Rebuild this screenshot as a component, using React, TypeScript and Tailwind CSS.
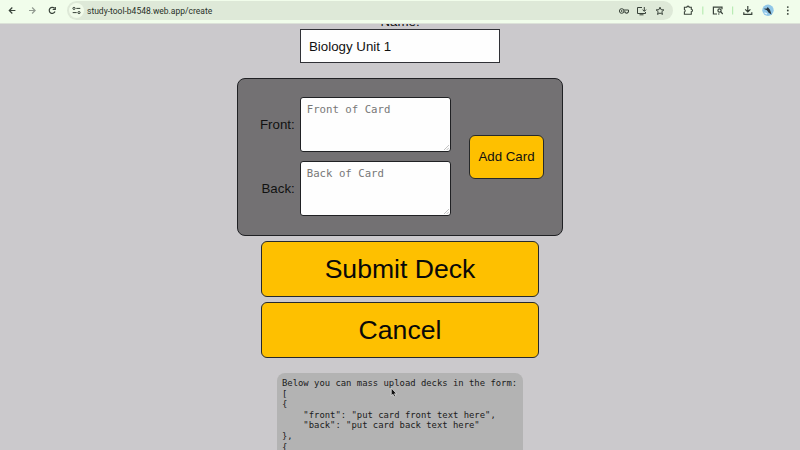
import React from 'react';

const line = { fill: 'none', stroke: '#39433a', strokeWidth: 1.2 } as const;

function Toolbar() {
  return (
    <header className="relative z-10 flex h-6 shrink-0 border-b border-[#dce2d8] bg-[#f1fdeb]">
      <svg className="h-[21px] w-[67px] shrink-0" viewBox="0 0 67 21" {...line}>
        <path d="M15.4 10.5H9.5M12.3 7.5l-3 3 3 3" />
        <path d="M29 10.5h5.9M32.1 7.5l3 3-3 3" stroke="#929b91" />
        <path d="M54.5 8.4a3 3 0 1 0 .5 3.2M55.3 6.9v2.6h-2.6" />
      </svg>
      <div className="mt-[1px] flex h-[19px] w-[606px] items-center rounded-full bg-[#dee9d8]">
        <div className="ml-[2px] flex h-[15px] w-[15px] items-center justify-center rounded-full bg-[#f1fbea]">
          <svg width="9" height="9" viewBox="0 0 9 9" fill="none" stroke="#39433a" strokeWidth="1">
            <circle cx="2" cy="2.4" r="1.1" />
            <path d="M4.3 2.4h4M.7 6.6h4" />
            <circle cx="7" cy="6.6" r="1.1" />
          </svg>
        </div>
        <span className="ml-[3px] w-[126px] whitespace-nowrap font-['Roboto',sans-serif] text-[8.5px] leading-3 text-[#293129]">study-tool-b4548.web.app/create</span>
        <svg className="ml-auto mr-[8px]" width="48" height="12" viewBox="0 0 48 12" {...line} strokeWidth="1">
          <circle cx="4.7" cy="6" r="2.3" />
          <circle cx="4.7" cy="6" r=".5" />
          <path d="M6.8 5h4.7v2.3h-1v.9H8.7V7H6.8" />
          <path d="M25 2.5h-4.5v6h8V7M22.5 9.8h4M27.3 2v4M25.5 4.6l1.8 1.8 1.8-1.8" />
          <path d="m43 2.2 1.1 2.5 2.8.2-2.1 1.8.7 2.7L43 8l-2.5 1.4.7-2.7-2.1-1.8 2.8-.2z" />
        </svg>
      </div>
      <svg className="h-[21px] w-[127px] shrink-0" viewBox="673 0 127 21" {...line}>
        <path d="M684.4 7.3h2.4a1.2 1.2 0 0 1 2.4 0h2.1v2a1.2 1.2 0 0 1 0 2.4v2.5h-6.9v-2.3a1.3 1.3 0 0 0 0-2.4z" strokeWidth="1.1" />
        <path d="M702.8 6.5v8M732.6 6.5v8" stroke="#b9ecb4" />
        <path d="M717 14h-3.6V7.2h8.6v2" />
        <circle cx="719.5" cy="10.5" r="1.6" />
        <path d="m720.7 11.7 2 2.3M718 14h1.5" />
        <path d="M747.8 6v5.8M745.2 9.4l2.6 2.6 2.6-2.6M743.8 12.2v2.2h8v-2.2" />
        <circle cx="768" cy="10.3" r="5.7" fill="#91c7e8" stroke="none" />
        <path d="m763.5 8.8 3.4-.3.8-1.5 2.3 2.8 1.5 4.8-2.8-1.9-1.8-2.4z" fill="#26333b" stroke="none" />
        <path d="m764.5 12.8 2.5 1.2" stroke="#e9f6ff" />
        <g fill="#39433a" stroke="none">
          <circle cx="787.8" cy="7.1" r=".9" />
          <circle cx="787.8" cy="10.5" r=".9" />
          <circle cx="787.8" cy="13.9" r=".9" />
        </g>
      </svg>
    </header>
  );
}

function CardField({ label, hint }: { label: string; hint: string }) {
  return (
    <div className="flex items-center justify-end gap-[5px]">
      <label className="pt-[1px] text-[13.3px] leading-4">{label}</label>
      <div className="relative">
        <textarea
          placeholder={hint}
          className="block h-[55px] w-[151px] resize-none rounded-[3px] border border-[#202124] bg-[#fefefe] px-[6px] py-[5px] font-['DejaVu_Sans_Mono',monospace] text-[10.7px] leading-[14px] placeholder:text-[#777777] placeholder:opacity-100"
        />
        <svg className="absolute bottom-[2px] right-[2px]" width="5" height="5" viewBox="0 0 5 5" stroke="#999999" strokeWidth=".6">
          <path d="M0 5 5 0M2.7 5 5 2.7" />
        </svg>
      </div>
    </div>
  );
}

function DeckButton({ children }: { children: React.ReactNode }) {
  return (
    <button className="h-14 w-[278px] rounded-[6px] border border-[#26292b] bg-[#fec000] text-[26.6px] leading-8 text-[#090909]">
      {children}
    </button>
  );
}

const sample = `Below you can mass upload decks in the form:
[
{
    "front": "put card front text here",
    "back": "put card back text here"
},
{`;

export default function App() {
  return (
    <div className="relative flex h-[450px] w-[800px] flex-col overflow-hidden bg-[#cbc9cc] font-['Liberation_Sans',Arial,sans-serif] text-[#111111]">
      <Toolbar />
      <main className="flex min-h-0 flex-1 flex-col items-center overflow-hidden">
        <label className="-mt-[10px] h-[15px] shrink-0 text-[13.3px] leading-[15px]">Name:</label>
        <input
          defaultValue="Biology Unit 1"
          className="h-[34px] w-[200px] shrink-0 border border-[#303136] bg-[#fefefe] px-2 text-[13.3px]"
        />
        <section className="mt-[15px] flex h-[158px] w-[326px] shrink-0 items-center justify-between rounded-[8px] border border-[#202124] bg-[#737173] pl-[22px] pr-[18px]">
          <div className="flex flex-col gap-[9px] pb-[1px]">
            <CardField label="Front:" hint="Front of Card" />
            <CardField label="Back:" hint="Back of Card" />
          </div>
          <button className="h-[44px] w-[75px] rounded-[6px] border border-[#26292b] bg-[#fec000] text-[13.3px]">Add Card</button>
        </section>
        <div className="mt-[5px] flex shrink-0 flex-col gap-[5px]">
          <DeckButton>Submit Deck</DeckButton>
          <DeckButton>Cancel</DeckButton>
        </div>
        <pre className="mt-[15px] min-h-[90px] w-[246px] shrink-0 rounded-[8px] bg-[#b3b3b3] px-[5px] py-[5px] font-['DejaVu_Sans_Mono',monospace] text-[8.9px] leading-[10.6px] text-[#202020]">{sample}</pre>
      </main>
      <svg className="absolute left-[389.5px] top-[387px]" width="8" height="12" viewBox="0 0 7 11">
        <path d="M1 1v7l1.6-1.4 1 2.4 1.3-.6-1-2.2h2z" fill="#111" stroke="#eee" strokeWidth=".6" />
      </svg>
    </div>
  );
}
